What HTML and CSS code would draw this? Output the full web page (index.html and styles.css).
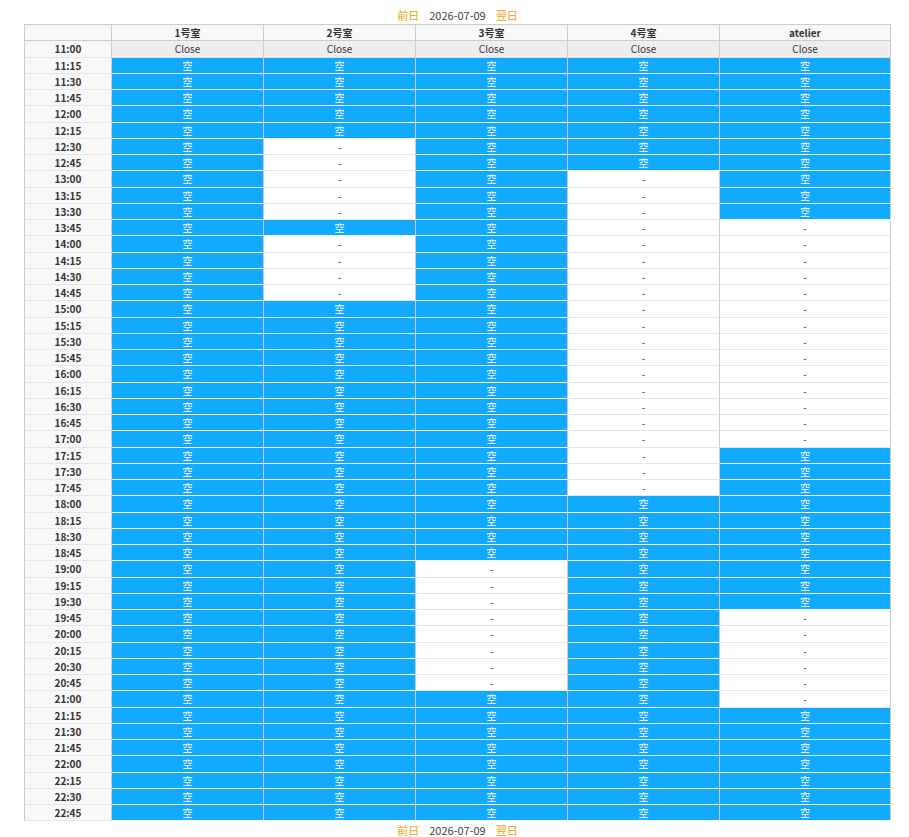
FILE: index.html
```html
<!DOCTYPE html>
<html lang="ja">
<head>
<meta charset="utf-8">
<title>予約状況</title>
<link rel="stylesheet" href="styles.css">
</head>
<body>
<div class="wrap">
  <div class="nav"><a class="nav-link">前日</a><span class="nav-date">2026-07-09</span><a class="nav-link">翌日</a></div>
  <table class="sched">
    <colgroup><col class="c-time"><col class="c-room"><col class="c-room"><col class="c-room"><col class="c-room"><col class="c-atelier"></colgroup>
    <thead>
      <tr><th class="corner"></th><th>1号室</th><th>2号室</th><th>3号室</th><th>4号室</th><th>atelier</th></tr>
    </thead>
    <tbody>
      <tr><th class="t">11:00</th><td class="close">Close</td><td class="close">Close</td><td class="close">Close</td><td class="close">Close</td><td class="close">Close</td></tr>
      <tr><th class="t">11:15</th><td class="a">空</td><td class="a">空</td><td class="a">空</td><td class="a">空</td><td class="a">空</td></tr>
      <tr><th class="t">11:30</th><td class="a">空</td><td class="a">空</td><td class="a">空</td><td class="a">空</td><td class="a">空</td></tr>
      <tr><th class="t">11:45</th><td class="a">空</td><td class="a">空</td><td class="a">空</td><td class="a">空</td><td class="a">空</td></tr>
      <tr><th class="t">12:00</th><td class="a">空</td><td class="a">空</td><td class="a">空</td><td class="a">空</td><td class="a">空</td></tr>
      <tr><th class="t">12:15</th><td class="a">空</td><td class="a">空</td><td class="a">空</td><td class="a">空</td><td class="a">空</td></tr>
      <tr><th class="t">12:30</th><td class="a">空</td><td class="n">-</td><td class="a">空</td><td class="a">空</td><td class="a">空</td></tr>
      <tr><th class="t">12:45</th><td class="a">空</td><td class="n">-</td><td class="a">空</td><td class="a">空</td><td class="a">空</td></tr>
      <tr><th class="t">13:00</th><td class="a">空</td><td class="n">-</td><td class="a">空</td><td class="n">-</td><td class="a">空</td></tr>
      <tr><th class="t">13:15</th><td class="a">空</td><td class="n">-</td><td class="a">空</td><td class="n">-</td><td class="a">空</td></tr>
      <tr><th class="t">13:30</th><td class="a">空</td><td class="n">-</td><td class="a">空</td><td class="n">-</td><td class="a">空</td></tr>
      <tr><th class="t">13:45</th><td class="a">空</td><td class="a">空</td><td class="a">空</td><td class="n">-</td><td class="n">-</td></tr>
      <tr><th class="t">14:00</th><td class="a">空</td><td class="n">-</td><td class="a">空</td><td class="n">-</td><td class="n">-</td></tr>
      <tr><th class="t">14:15</th><td class="a">空</td><td class="n">-</td><td class="a">空</td><td class="n">-</td><td class="n">-</td></tr>
      <tr><th class="t">14:30</th><td class="a">空</td><td class="n">-</td><td class="a">空</td><td class="n">-</td><td class="n">-</td></tr>
      <tr><th class="t">14:45</th><td class="a">空</td><td class="n">-</td><td class="a">空</td><td class="n">-</td><td class="n">-</td></tr>
      <tr><th class="t">15:00</th><td class="a">空</td><td class="a">空</td><td class="a">空</td><td class="n">-</td><td class="n">-</td></tr>
      <tr><th class="t">15:15</th><td class="a">空</td><td class="a">空</td><td class="a">空</td><td class="n">-</td><td class="n">-</td></tr>
      <tr><th class="t">15:30</th><td class="a">空</td><td class="a">空</td><td class="a">空</td><td class="n">-</td><td class="n">-</td></tr>
      <tr><th class="t">15:45</th><td class="a">空</td><td class="a">空</td><td class="a">空</td><td class="n">-</td><td class="n">-</td></tr>
      <tr><th class="t">16:00</th><td class="a">空</td><td class="a">空</td><td class="a">空</td><td class="n">-</td><td class="n">-</td></tr>
      <tr><th class="t">16:15</th><td class="a">空</td><td class="a">空</td><td class="a">空</td><td class="n">-</td><td class="n">-</td></tr>
      <tr><th class="t">16:30</th><td class="a">空</td><td class="a">空</td><td class="a">空</td><td class="n">-</td><td class="n">-</td></tr>
      <tr><th class="t">16:45</th><td class="a">空</td><td class="a">空</td><td class="a">空</td><td class="n">-</td><td class="n">-</td></tr>
      <tr><th class="t">17:00</th><td class="a">空</td><td class="a">空</td><td class="a">空</td><td class="n">-</td><td class="n">-</td></tr>
      <tr><th class="t">17:15</th><td class="a">空</td><td class="a">空</td><td class="a">空</td><td class="n">-</td><td class="a">空</td></tr>
      <tr><th class="t">17:30</th><td class="a">空</td><td class="a">空</td><td class="a">空</td><td class="n">-</td><td class="a">空</td></tr>
      <tr><th class="t">17:45</th><td class="a">空</td><td class="a">空</td><td class="a">空</td><td class="n">-</td><td class="a">空</td></tr>
      <tr><th class="t">18:00</th><td class="a">空</td><td class="a">空</td><td class="a">空</td><td class="a">空</td><td class="a">空</td></tr>
      <tr><th class="t">18:15</th><td class="a">空</td><td class="a">空</td><td class="a">空</td><td class="a">空</td><td class="a">空</td></tr>
      <tr><th class="t">18:30</th><td class="a">空</td><td class="a">空</td><td class="a">空</td><td class="a">空</td><td class="a">空</td></tr>
      <tr><th class="t">18:45</th><td class="a">空</td><td class="a">空</td><td class="a">空</td><td class="a">空</td><td class="a">空</td></tr>
      <tr><th class="t">19:00</th><td class="a">空</td><td class="a">空</td><td class="n">-</td><td class="a">空</td><td class="a">空</td></tr>
      <tr><th class="t">19:15</th><td class="a">空</td><td class="a">空</td><td class="n">-</td><td class="a">空</td><td class="a">空</td></tr>
      <tr><th class="t">19:30</th><td class="a">空</td><td class="a">空</td><td class="n">-</td><td class="a">空</td><td class="a">空</td></tr>
      <tr><th class="t">19:45</th><td class="a">空</td><td class="a">空</td><td class="n">-</td><td class="a">空</td><td class="n">-</td></tr>
      <tr><th class="t">20:00</th><td class="a">空</td><td class="a">空</td><td class="n">-</td><td class="a">空</td><td class="n">-</td></tr>
      <tr><th class="t">20:15</th><td class="a">空</td><td class="a">空</td><td class="n">-</td><td class="a">空</td><td class="n">-</td></tr>
      <tr><th class="t">20:30</th><td class="a">空</td><td class="a">空</td><td class="n">-</td><td class="a">空</td><td class="n">-</td></tr>
      <tr><th class="t">20:45</th><td class="a">空</td><td class="a">空</td><td class="n">-</td><td class="a">空</td><td class="n">-</td></tr>
      <tr><th class="t">21:00</th><td class="a">空</td><td class="a">空</td><td class="a">空</td><td class="a">空</td><td class="n">-</td></tr>
      <tr><th class="t">21:15</th><td class="a">空</td><td class="a">空</td><td class="a">空</td><td class="a">空</td><td class="a">空</td></tr>
      <tr><th class="t">21:30</th><td class="a">空</td><td class="a">空</td><td class="a">空</td><td class="a">空</td><td class="a">空</td></tr>
      <tr><th class="t">21:45</th><td class="a">空</td><td class="a">空</td><td class="a">空</td><td class="a">空</td><td class="a">空</td></tr>
      <tr><th class="t">22:00</th><td class="a">空</td><td class="a">空</td><td class="a">空</td><td class="a">空</td><td class="a">空</td></tr>
      <tr><th class="t">22:15</th><td class="a">空</td><td class="a">空</td><td class="a">空</td><td class="a">空</td><td class="a">空</td></tr>
      <tr><th class="t">22:30</th><td class="a">空</td><td class="a">空</td><td class="a">空</td><td class="a">空</td><td class="a">空</td></tr>
      <tr><th class="t">22:45</th><td class="a">空</td><td class="a">空</td><td class="a">空</td><td class="a">空</td><td class="a">空</td></tr>
    </tbody>
  </table>
  <div class="nav"><a class="nav-link">前日</a><span class="nav-date">2026-07-09</span><a class="nav-link">翌日</a></div>
</div>
</body>
</html>
```
FILE: styles.css
```css
html, body {
  margin: 0;
  padding: 0;
  background: #fff;
}
body {
  font-family: "Noto Sans CJK JP", "Noto Sans", sans-serif;
  color: #333;
}
.wrap {
  width: 867px;
  margin-left: 24px;
  padding-top: 6px;
}
.nav {
  display: flex;
  justify-content: center;
  align-items: center;
  gap: 10px;
  height: 18px;
  font-size: 11px;
  line-height: 16px;
  color: #444;
}
.nav-link {
  color: #f0a30a;
  cursor: pointer;
}
.sched {
  width: 867px;
  table-layout: fixed;
  border-collapse: separate;
  border-spacing: 0;
  border-left: 1px solid #cccccc;
  border-top: 1px solid #cccccc;
  font-size: 10px;
}
.c-time { width: 87px; }
.c-room { width: 152px; }
.c-atelier { width: 171px; }
.sched th, .sched td {
  padding: 0;
  height: 15.25px;
  line-height: 15px;
  text-align: center;
  border-right: 1px solid #cccccc;
  border-bottom: 1px solid #e6e6e6;
  white-space: nowrap;
  overflow: hidden;
}
.sched thead th {
  background: #f8f8f8;
  font-weight: bold;
  border-bottom-color: #cccccc;
}
.sched th.t {
  background: #f8f8f8;
  font-weight: bold;
}
.sched td.close {
  background: #eeeeee;
  border-bottom-color: #e0e0e0;
}
.sched td.a {
  background: #11aaff;
  color: #fff;
  border-bottom-color: #ffffff;
}
.sched td.n {
  background: #fff;
  color: #333;
}
```
